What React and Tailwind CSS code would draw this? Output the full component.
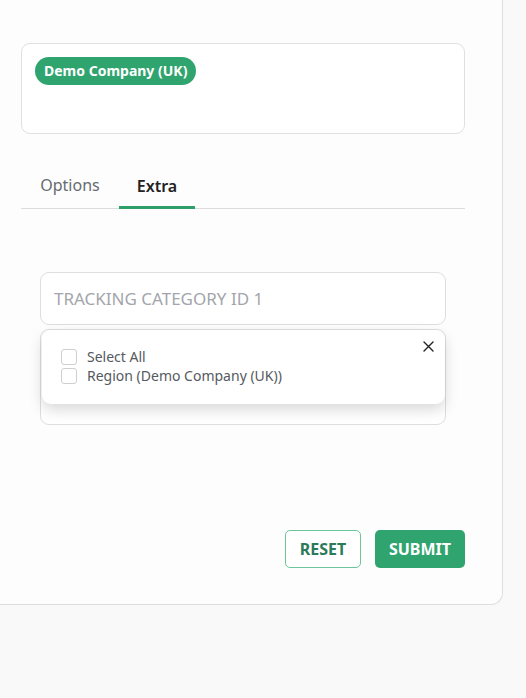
import React from "react";

export default function App() {
  return (
    <div className="min-h-[698px] w-[526px] bg-[#f9f9f9] font-['Noto_Sans',sans-serif]">
      <div className="w-[503px] h-[605px] bg-[#fdfdfd] border-r border-b border-[#dedede] rounded-br-[12px] pl-[21px] pr-[37px] pt-[43px] flex flex-col">
        <div className="w-[444px] h-[91px] rounded-[9px] border border-[#e0e0e0] bg-white pl-[13px] pt-[13px]">
          <span className="inline-flex items-center h-[28px] px-[9px] rounded-full bg-[#30a46f] text-white text-[14px] font-bold leading-none">
            Demo Company (UK)
          </span>
        </div>

        <div className="mt-[30px] w-[444px] flex border-b border-[#dcdcdc] h-[45px]">
          <div className="w-[98px] flex items-center justify-center text-[16px] text-[#666b70] pb-[3px]">Options</div>
          <div className="w-[76px] flex items-center justify-center text-[16px] font-semibold text-[#222] border-b-[3px] border-[#2e9e6a] -mb-px pt-[1px]">Extra</div>
        </div>

        <div className="pl-[19px] pt-[63px]">
          <div className="w-[406px] h-[53px] rounded-[9px] border border-[#dedede] bg-white flex items-center pl-[13px] text-[17px] text-[#a3a5ab]">
            TRACKING CATEGORY ID 1
          </div>
          <div className="relative mt-[4px] w-[406px] h-[96px] rounded-[9px] border border-[#dedede] bg-white">
            <div className="absolute left-px top-0 w-[403px] h-[74px] rounded-[9px] bg-white shadow-[0_6px_14px_rgba(0,0,0,0.15)] pl-[19px] pt-[17px]">
              <label className="flex items-center gap-[10px] h-[19px] text-[14px] text-[#555a60]">
                <span className="w-[16px] h-[16px] rounded-[3px] border border-[#cfcfcf] bg-white" />
                Select All
              </label>
              <label className="flex items-center gap-[10px] h-[19px] text-[14px] text-[#555a60]">
                <span className="w-[16px] h-[16px] rounded-[3px] border border-[#cfcfcf] bg-white" />
                Region (Demo Company (UK))
              </label>
              <svg className="absolute right-[11px] top-[11px]" width="11" height="11" viewBox="0 0 11 11">
                <path d="M1 1L10 10M10 1L1 10" stroke="#222" strokeWidth="1.4" strokeLinecap="round" />
              </svg>
            </div>
          </div>
        </div>

        <div className="mt-[105px] w-[444px] flex justify-end gap-[14px]">
          <button className="h-[38px] w-[76px] rounded-[5px] border border-[#6cc69b] bg-white text-[16px] font-bold text-[#2b7a5a]">RESET</button>
          <button className="h-[38px] w-[90px] rounded-[5px] bg-[#30a46f] text-[16px] font-bold text-white">SUBMIT</button>
        </div>
      </div>
    </div>
  );
}
